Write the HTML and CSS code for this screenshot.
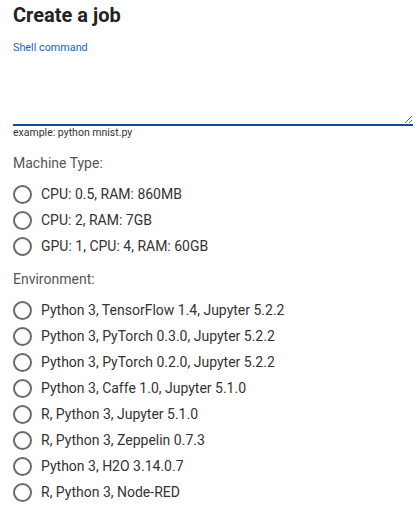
FILE: index.html
```html
<!DOCTYPE html>
<html>
<head>
<meta charset="utf-8">
<link rel="stylesheet" href="styles.css">
</head>
<body>
<h1 class="title">Create a job</h1>
<label class="field-label" for="cmd">Shell command</label>
<textarea id="cmd" class="cmd"></textarea>
<div class="helper">example: python mnist.py</div>

<div class="group-label">Machine Type:</div>
<div class="radios">
  <label class="radio"><input type="radio" name="m"><span>CPU: 0.5, RAM: 860MB</span></label>
  <label class="radio"><input type="radio" name="m"><span>CPU: 2, RAM: 7GB</span></label>
  <label class="radio"><input type="radio" name="m"><span>GPU: 1, CPU: 4, RAM: 60GB</span></label>
</div>

<div class="group-label env">Environment:</div>
<div class="radios">
  <label class="radio"><input type="radio" name="e"><span>Python 3, TensorFlow 1.4, Jupyter 5.2.2</span></label>
  <label class="radio"><input type="radio" name="e"><span>Python 3, PyTorch 0.3.0, Jupyter 5.2.2</span></label>
  <label class="radio"><input type="radio" name="e"><span>Python 3, PyTorch 0.2.0, Jupyter 5.2.2</span></label>
  <label class="radio"><input type="radio" name="e"><span>Python 3, Caffe 1.0, Jupyter 5.1.0</span></label>
  <label class="radio"><input type="radio" name="e"><span>R, Python 3, Jupyter 5.1.0</span></label>
  <label class="radio"><input type="radio" name="e"><span>R, Python 3, Zeppelin 0.7.3</span></label>
  <label class="radio"><input type="radio" name="e"><span>Python 3, H2O 3.14.0.7</span></label>
  <label class="radio"><input type="radio" name="e"><span>R, Python 3, Node-RED</span></label>
</div>
</body>
</html>
```
FILE: styles.css
```css
html, body {
  margin: 0;
  padding: 0;
  background: #fff;
}
body {
  font-family: Roboto, "Liberation Sans", sans-serif;
  padding: 0 7px 0 13px;
  width: 400px;
  display: flex;
  flex-direction: column;
  color: #333;
}
.title {
  margin: 3px 0 0 0;
  font-size: 20px;
  line-height: 24px;
  font-weight: 700;
  color: #222;
}
.field-label {
  margin-top: 14px;
  font-size: 10.8px;
  line-height: 14px;
  color: #1565c0;
}
.cmd {
  display: block;
  box-sizing: border-box;
  width: 400px;
  height: 71px;
  margin: 0;
  padding: 0;
  border: none;
  border-bottom: 2px solid #0d5096;
  background: transparent;
  outline: none;
  font-family: inherit;
}
.helper {
  margin-top: 1px;
  font-size: 10.5px;
  line-height: 12px;
  color: #333;
}
.group-label {
  margin-top: 14px;
  font-size: 14px;
  line-height: 20px;
  color: #555;
}
.group-label.env {
  margin-top: 10px;
}
.radios {
  margin-top: 8px;
  display: flex;
  flex-direction: column;
}
.radio {
  display: flex;
  align-items: center;
  gap: 9px;
  height: 26px;
  font-size: 14px;
  color: #333;
}
.radio input {
  appearance: none;
  -webkit-appearance: none;
  box-sizing: border-box;
  width: 19px;
  height: 19px;
  margin: 0;
  border: 2px solid #6b6b6b;
  border-radius: 50%;
  background: #fff;
  flex: none;
}
```
